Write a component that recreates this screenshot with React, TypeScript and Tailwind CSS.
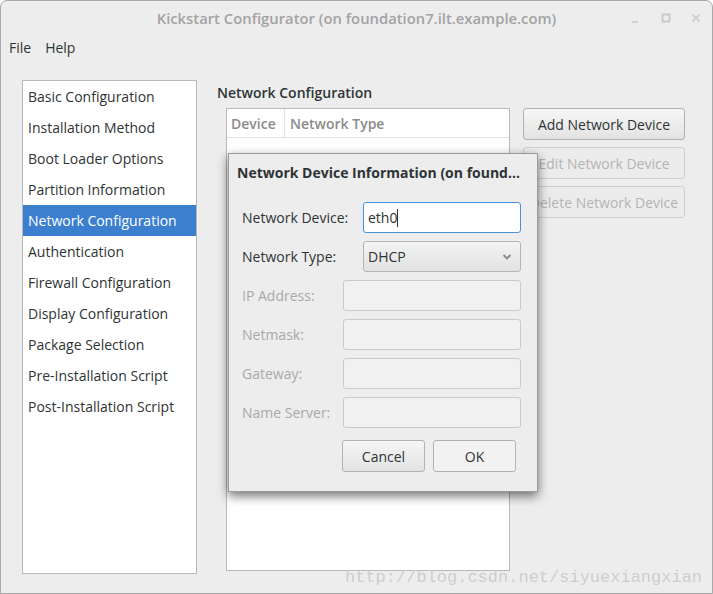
import React from "react";

const items = [
  "Basic Configuration",
  "Installation Method",
  "Boot Loader Options",
  "Partition Information",
  "Network Configuration",
  "Authentication",
  "Firewall Configuration",
  "Display Configuration",
  "Package Selection",
  "Pre-Installation Script",
  "Post-Installation Script",
];

function GtkButton({ label, disabled, className = "" }: { label: string; disabled?: boolean; className?: string }) {
  return (
    <div
      className={
        "h-[32px] flex items-center justify-center rounded-[3px] border text-[14px] whitespace-nowrap overflow-hidden " +
        (disabled
          ? "border-[#cfcfcf] text-[#b4b4b4] bg-[#ececec] "
          : "border-[#b2b2b2] text-[#2e3436] bg-gradient-to-b from-[#f6f6f6] to-[#e3e3e3] ") +
        className
      }
    >
      {label}
    </div>
  );
}

function Field({ label, children, disabled }: { label: string; children: React.ReactNode; disabled?: boolean }) {
  return (
    <div className="flex items-center h-[31px]">
      <span className={"text-[14px] " + (disabled ? "text-[#a9a9a9]" : "text-[#2e3436]")}>{label}</span>
      <div className="ml-auto">{children}</div>
    </div>
  );
}

function DisabledInput() {
  return <div className="w-[178px] h-[31px] rounded-[3px] border border-[#cacaca] bg-[#f1f1f1]" />;
}

export default function App() {
  return (
    <div className="relative w-[713px] h-[594px] overflow-hidden bg-[#ededed] border border-[#a9a9a9] rounded-t-[7px] flex flex-col text-[#2e3436] [font-family:'Open_Sans',sans-serif]">
      {/* title bar */}
      <div className="relative h-[34px] flex items-center justify-center">
        <span className="text-[14.8px] font-semibold text-[#a3a3a3]">Kickstart Configurator (on foundation7.ilt.example.com)</span>
        <div className="absolute right-[10px] top-[11px] flex items-center gap-[18px]">
          <svg width="12" height="12" viewBox="0 0 12 12">
            <rect x="2" y="9" width="6" height="2" fill="#cfcfcf" />
          </svg>
          <svg width="12" height="12" viewBox="0 0 12 12">
            <rect x="2.5" y="2.5" width="7" height="7" fill="none" stroke="#cbcbcb" strokeWidth="2" />
          </svg>
          <svg width="12" height="12" viewBox="0 0 12 12">
            <path d="M2.5 2.5 L9.5 9.5 M9.5 2.5 L2.5 9.5" stroke="#d2d2d2" strokeWidth="2.2" />
          </svg>
        </div>
      </div>

      {/* menu bar */}
      <div className="h-[25px] flex items-center gap-[14px] px-[8px] text-[14px]">
        <span>File</span>
        <span>Help</span>
      </div>

      {/* body */}
      <div className="flex flex-1 pt-[20px] pl-[21px] pb-[19px]">
        <div className="w-[175px] bg-white border border-[#b8b8b8]">
          {items.map((it) => (
            <div
              key={it}
              className={
                "h-[31px] px-[5px] flex items-center text-[14px] whitespace-nowrap " +
                (it === "Network Configuration" ? "bg-[#3b7fce] text-white" : "")
              }
            >
              {it}
            </div>
          ))}
        </div>

        <div className="ml-[20px] flex flex-col">
          <div className="h-[24px] flex items-center text-[14px] font-semibold">Network Configuration</div>
          <div className="flex mt-[4px] ml-[9px]">
            <div className="w-[284px] h-[463px] bg-white border border-[#b8b8b8]">
              <div className="h-[29px] flex border-b border-[#e2e2e2] text-[14px] font-semibold text-[#8b8b8b]">
                <div className="w-[58px] border-r border-[#e2e2e2] px-[4px] flex items-center">Device</div>
                <div className="px-[5px] flex items-center">Network Type</div>
              </div>
            </div>
            <div className="ml-[13px] w-[162px] flex flex-col gap-[7px]">
              <GtkButton label="Add Network Device" />
              <GtkButton label="Edit Network Device" disabled />
              <GtkButton label="Delete Network Device" disabled />
            </div>
          </div>
        </div>
      </div>

      {/* dialog */}
      <div className="absolute left-[227px] top-[152px] w-[310px] h-[339px] bg-[#ededed] border border-[#9a9a9a] shadow-[0_4px_10px_rgba(0,0,0,0.55)] flex flex-col">
        <div className="h-[36px] flex items-center px-[8px] text-[14px] font-bold whitespace-nowrap">
          Network Device Information (on found...
        </div>
        <div className="flex flex-col gap-[8px] mt-[12px] pl-[13px] pr-[16px]">
          <Field label="Network Device:">
            <div className="w-[158px] h-[31px] rounded-[3px] border border-[#4a90d9] bg-white flex items-center px-[4px] text-[14px]">
              eth0<span className="inline-block w-px h-[18px] bg-[#2e3436]" />
            </div>
          </Field>
          <Field label="Network Type:">
            <div className="w-[158px] h-[31px] rounded-[3px] border border-[#b5b5b5] bg-gradient-to-b from-[#f3f3f3] to-[#e2e2e2] flex items-center px-[4px] text-[14px]">
              DHCP
              <svg className="ml-auto mr-[4px]" width="10" height="8" viewBox="0 0 10 8">
                <path d="M1.5 2 L5 5.5 L8.5 2" fill="none" stroke="#8a8a8a" strokeWidth="1.8" />
              </svg>
            </div>
          </Field>
          <Field label="IP Address:" disabled>
            <DisabledInput />
          </Field>
          <Field label="Netmask:" disabled>
            <DisabledInput />
          </Field>
          <Field label="Gateway:" disabled>
            <DisabledInput />
          </Field>
          <Field label="Name Server:" disabled>
            <DisabledInput />
          </Field>
        </div>
        <div className="flex justify-end gap-[8px] mt-[12px] pr-[21px]">
          <GtkButton label="Cancel" className="w-[83px]" />
          <GtkButton label="OK" className="w-[83px] !bg-none !bg-[#f2f2f2]" />
        </div>
      </div>

      {/* watermark */}
      <div className="absolute left-[344px] top-[568px] text-[17px] leading-none text-[#cdcdcd] whitespace-nowrap [font-family:'Liberation_Mono',monospace]">
        http://blog.csdn.net/siyuexiangxian
      </div>
    </div>
  );
}
